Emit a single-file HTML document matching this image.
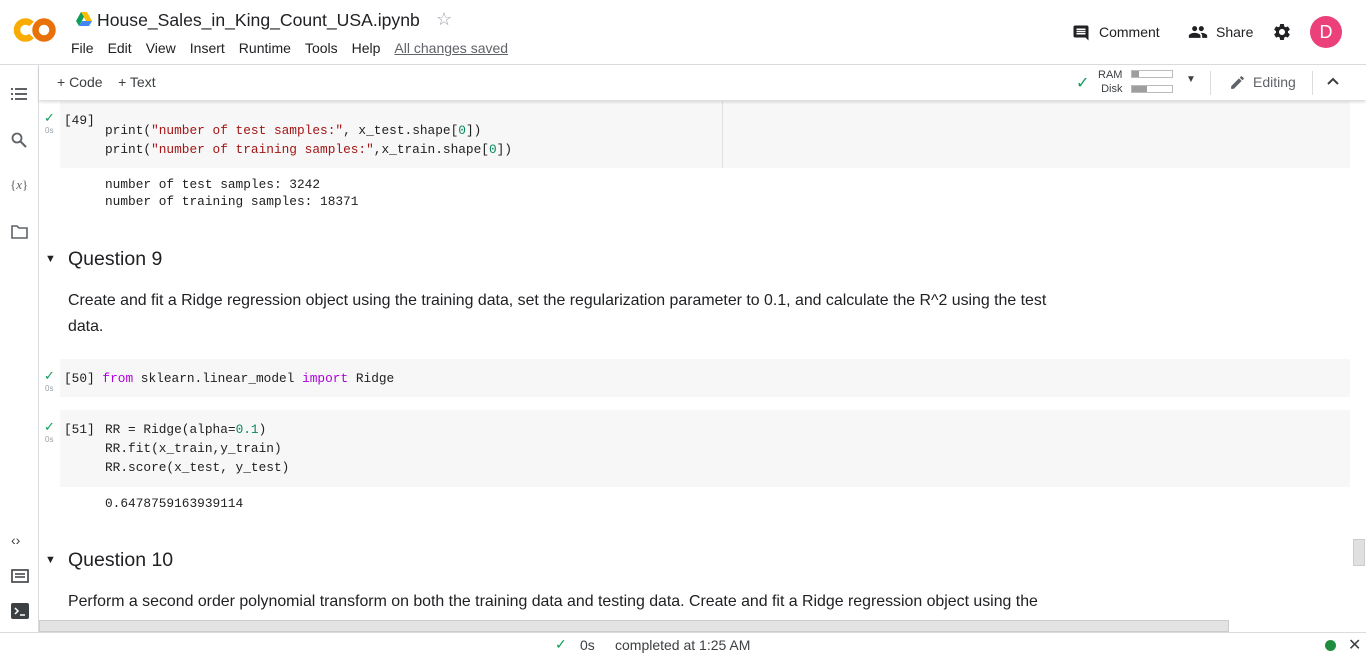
<!DOCTYPE html>
<html><head><meta charset="utf-8"><style>
*{margin:0;padding:0;box-sizing:border-box}
body{width:1366px;height:657px;overflow:hidden;background:#fff;font-family:"Liberation Sans",Arial,sans-serif;color:#202124;position:relative}
.a{position:absolute;white-space:nowrap}
.mono{font-family:"Liberation Mono",monospace;font-size:12.8px;line-height:19px;color:#212121}
.cell{position:absolute;left:60px;width:1290px;background:#f7f7f7}
.str{color:#a31515}.num{color:#09885a}.kw{color:#af00db}
.chk{color:#0f9d58;font-size:13px}
.os{font-size:8px;color:#9aa0a6}
.menu span{margin-right:14px}
.side svg{position:absolute;left:11px}
</style></head><body>
<!-- header -->
<svg class="a" style="left:13px;top:16px" width="44" height="28" viewBox="0 0 44 28">
<path d="M18.5 8A8.5 8.5 0 1 0 18.5 20" fill="none" stroke="#f9ab00" stroke-width="6.5"/>
<circle cx="31" cy="14" r="8.5" fill="none" stroke="#e8710a" stroke-width="6.5"/>
</svg>
<svg class="a" style="left:76px;top:12px" width="16" height="14" viewBox="0 0 16 14"><path d="M5 0h6l5 9h-6z" fill="#fbbc04"/><path d="M5 0L0 9l3 5 5-9z" fill="#0f9d58"/><path d="M3 14h10l3-5H6z" fill="#4285f4"/></svg>
<div class="a" style="left:97px;top:10px;font-size:17.6px;color:#202124">House_Sales_in_King_Count_USA.ipynb</div>
<div class="a" style="left:436px;top:9px;font-size:18px;color:#9aa0a6">☆</div>
<div class="a menu" style="left:71px;top:40px;font-size:14px;color:#202124"><span>File</span><span>Edit</span><span>View</span><span>Insert</span><span>Runtime</span><span>Tools</span><span>Help</span><span style="color:#5f6368;text-decoration:underline">All changes saved</span></div>
<svg class="a" style="left:1072px;top:24px" width="18" height="18" viewBox="0 0 24 24"><path d="M21.99 4c0-1.1-.89-2-1.99-2H4c-1.1 0-2 .9-2 2v12c0 1.1.9 2 2 2h14l4 4-.01-18zM18 14H6v-2h12v2zm0-3H6V9h12v2zm0-3H6V6h12v2z" fill="#202124"/></svg>
<div class="a" style="left:1099px;top:24px;font-size:14px">Comment</div>
<svg class="a" style="left:1187px;top:22px" width="22" height="20" viewBox="0 0 24 24"><path d="M16 11c1.66 0 2.99-1.34 2.99-3S17.66 5 16 5c-1.66 0-3 1.34-3 3s1.34 3 3 3zm-8 0c1.66 0 2.99-1.34 2.99-3S9.66 5 8 5C6.34 5 5 6.34 5 8s1.34 3 3 3zm0 2c-2.33 0-7 1.17-7 3.5V19h14v-2.5c0-2.33-4.670-3.5-7-3.5zm8 0c-.29 0-.62.02-.97.05 1.16.84 1.97 1.970 1.97 3.45V19h6v-2.5c0-2.330-4.67-3.5-7-3.5z" fill="#202124"/></svg>
<div class="a" style="left:1216px;top:24px;font-size:14px">Share</div>
<svg class="a" style="left:1272px;top:22px" width="20" height="20" viewBox="0 0 24 24"><path d="M19.14 12.94c.04-.3.06-.61.06-.94 0-.32-.02-.64-.07-.94l2.03-1.58a.49.49 0 00.12-.61l-1.92-3.32a.488.488 0 00-.59-.22l-2.39.96c-.5-.38-1.03-.7-1.62-.94l-.36-2.54a.484.484 0 00-.48-.41h-3.84c-.24 0-.43.17-.47.41l-.36 2.54c-.59.24-1.13.57-1.62.94l-2.39-.96c-.22-.08-.47 0-.59.22L2.74 8.87c-.12.21-.08.47.12.61l2.03 1.58c-.05.3-.09.63-.09.94s.02.64.07.94l-2.03 1.58a.49.49 0 00-.12.61l1.92 3.32c.12.22.37.29.59.22l2.39-.96c.5.38 1.03.7 1.62.94l.36 2.54c.05.24.24.41.48.41h3.84c.24 0 .44-.17.47-.41l.36-2.54c.59-.24 1.13-.56 1.62-.94l2.39.96c.22.08.47 0 .59-.22l1.92-3.32c.12-.22.07-.47-.12-.61l-2.01-1.58zM12 15.6c-1.98 0-3.6-1.62-3.6-3.6s1.62-3.6 3.6-3.6 3.6 1.62 3.6 3.6-1.62 3.6-3.6 3.6z" fill="#202124"/></svg>
<div class="a" style="left:1310px;top:16px;width:32px;height:32px;border-radius:50%;background:#ec407a;color:#fff;font-size:18px;text-align:center;line-height:32px">D</div>
<div class="a" style="left:0;top:64px;width:1366px;height:1px;background:#dadce0"></div>
<!-- toolbar -->
<div class="a" style="left:39px;top:65px;width:1327px;height:35px;background:#fff;box-shadow:0 2px 3px rgba(0,0,0,.15);z-index:2"></div>
<div class="a" style="left:57px;top:74px;font-size:14px;color:#3c4043;z-index:3">+ Code&nbsp;&nbsp;&nbsp;&nbsp;+ Text</div>
<div class="a chk" style="left:1076px;top:73px;font-size:16px;z-index:3">✓</div>
<div class="a" style="left:1098px;top:68px;font-size:11px;line-height:14px;color:#3c4043;text-align:right;z-index:3">RAM<br>Disk</div>
<div class="a" style="left:1131px;top:70px;width:42px;height:8px;border:1px solid #bbb;z-index:3"><div style="width:7px;height:6px;background:#9e9e9e"></div></div>
<div class="a" style="left:1131px;top:85px;width:42px;height:8px;border:1px solid #bbb;z-index:3"><div style="width:15px;height:6px;background:#9e9e9e"></div></div>
<div class="a" style="left:1186px;top:74px;font-size:10px;color:#3c4043;z-index:3">▼</div>
<div class="a" style="left:1210px;top:71px;width:1px;height:24px;background:#dadce0;z-index:3"></div>
<svg class="a" style="left:1229px;top:74px;z-index:3" width="17" height="17" viewBox="0 0 24 24"><path d="M3 17.25V21h3.75L17.81 9.94l-3.75-3.75L3 17.25zM20.71 7.04a1 1 0 000-1.41l-2.34-2.34a1 1 0 00-1.41 0l-1.830 1.83 3.75 3.75 1.83-1.83z" fill="#5f6368"/></svg>
<div class="a" style="left:1253px;top:74px;font-size:14px;color:#5f6368;z-index:3">Editing</div>
<div class="a" style="left:1312px;top:71px;width:1px;height:24px;background:#dadce0;z-index:3"></div>
<svg class="a" style="left:1327px;top:77px;z-index:3" width="12" height="8" viewBox="0 0 12 8"><path d="M1 7l5-5 5 5" stroke="#3c4043" stroke-width="2" fill="none"/></svg>
<!-- sidebar -->
<div class="a" style="left:38px;top:65px;width:1px;height:567px;background:#dadce0"></div>
<div class="side">
<svg class="a" style="top:87px" width="16" height="14" viewBox="0 0 16 14"><g fill="#5f6368"><rect x="0" y="1" width="2" height="2"/><rect x="4" y="1" width="12" height="2"/><rect x="0" y="6" width="2" height="2"/><rect x="4" y="6" width="12" height="2"/><rect x="0" y="11" width="2" height="2"/><rect x="4" y="11" width="12" height="2"/></g></svg>
<svg class="a" style="top:132px" width="16" height="16" viewBox="0 0 16 16"><circle cx="6" cy="6" r="4.5" stroke="#5f6368" stroke-width="1.8" fill="none"/><path d="M9.5 9.5L15 15" stroke="#5f6368" stroke-width="2"/></svg>
<div class="a" style="left:10px;top:177px;font-size:13px;color:#5f6368;font-family:'Liberation Serif',serif">{<i>x</i>}</div>
<svg class="a" style="top:225px" width="17" height="14" viewBox="0 0 17 14"><path d="M1 1h5l2 2h8v10H1z" stroke="#5f6368" stroke-width="1.6" fill="none"/></svg>
<div class="a" style="left:11px;top:532px;font-size:14px;color:#3c4043">‹›</div>
<svg class="a" style="top:569px" width="18" height="14" viewBox="0 0 18 14"><rect x="1" y="1" width="16" height="12" stroke="#3c4043" stroke-width="1.6" fill="none"/><path d="M4 5h10M4 8h10" stroke="#3c4043" stroke-width="1.4"/></svg>
<svg class="a" style="top:603px" width="18" height="16" viewBox="0 0 18 16"><rect width="18" height="16" rx="2" fill="#3c4043"/><path d="M4 5l3 3-3 3M9 12h5" stroke="#fff" stroke-width="1.5" fill="none"/></svg>
</div>
<!-- cell 49 -->
<div class="cell" style="top:101px;height:67px"></div>
<div class="a" style="left:722px;top:101px;width:1px;height:67px;background:#e0e0e0"></div>
<div class="a chk" style="left:44px;top:110px">✓</div><div class="a os" style="left:45px;top:126px">0s</div>
<div class="a mono" style="left:64px;top:111px">[49]</div>
<div class="a mono" style="left:105px;top:121px">print(<span class="str">"number of test samples:"</span>, x_test.shape[<span class="num">0</span>])<br>print(<span class="str">"number of training samples:"</span>,x_train.shape[<span class="num">0</span>])</div>
<div class="a mono" style="left:105px;top:176px;line-height:17px">number of test samples: 3242<br>number of training samples: 18371</div>
<!-- Q9 -->
<div class="a" style="left:45px;top:253px;font-size:11px;color:#202124">▼</div>
<div class="a" style="left:68px;top:248px;font-size:19.5px">Question 9</div>
<div class="a" style="left:68px;top:288px;font-size:15.9px;line-height:26px">Create and fit a Ridge regression object using the training data, set the regularization parameter to 0.1, and calculate the R^2 using the test<br>data.</div>
<!-- cell 50 -->
<div class="cell" style="top:359px;height:38px"></div>
<div class="a chk" style="left:44px;top:368px">✓</div><div class="a os" style="left:45px;top:384px">0s</div>
<div class="a mono" style="left:64px;top:369px">[50] <span class="kw">from</span> sklearn.linear_model <span class="kw">import</span> Ridge</div>
<!-- cell 51 -->
<div class="cell" style="top:410px;height:77px"></div>
<div class="a chk" style="left:44px;top:419px">✓</div><div class="a os" style="left:45px;top:435px">0s</div>
<div class="a mono" style="left:64px;top:420px">[51]</div>
<div class="a mono" style="left:105px;top:420px">RR = Ridge(alpha=<span class="num">0.1</span>)<br>RR.fit(x_train,y_train)<br>RR.score(x_test, y_test)</div>
<div class="a mono" style="left:105px;top:494px">0.6478759163939114</div>
<!-- Q10 -->
<div class="a" style="left:45px;top:554px;font-size:11px">▼</div>
<div class="a" style="left:68px;top:549px;font-size:19.5px">Question 10</div>
<div class="a" style="left:68px;top:589px;font-size:15.9px;line-height:26px">Perform a second order polynomial transform on both the training data and testing data. Create and fit a Ridge regression object using the<br>training data, set the regularisation parameter to 0.1, and calculate the R^2 utilising the test data provided. Take a screenshot of your code and</div>
<!-- scrollbars -->
<div class="a" style="left:1353px;top:539px;width:12px;height:27px;background:#e0e0e0;border:1px solid #ccc"></div>
<div class="a" style="left:39px;top:620px;width:1327px;height:12px;background:#fff;opacity:.85"></div>
<div class="a" style="left:39px;top:620px;width:1190px;height:12px;background:#e3e3e3;border:1px solid #ccc"></div>
<!-- status bar -->
<div class="a" style="left:0;top:632px;width:1366px;height:1px;background:#dadce0"></div>
<div class="a" style="left:0;top:633px;width:1366px;height:24px;background:#fff"></div>
<div class="a chk" style="left:555px;top:636px;font-size:14px">✓</div>
<div class="a" style="left:580px;top:637px;font-size:14px;color:#3c4043">0s</div>
<div class="a" style="left:615px;top:637px;font-size:14px;color:#3c4043">completed at 1:25 AM</div>
<div class="a" style="left:1325px;top:640px;width:11px;height:11px;border-radius:50%;background:#1e8e3e"></div>
<div class="a" style="left:1348px;top:635px;font-size:16px;color:#3c4043">✕</div>
</body></html>
